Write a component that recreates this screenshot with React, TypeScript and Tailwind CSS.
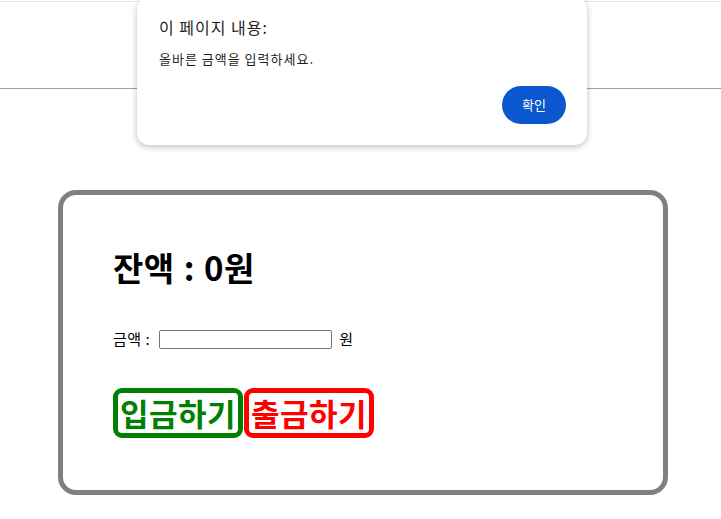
import React from "react";

export default function App() {
  const font = { fontFamily: '"Noto Sans CJK KR", "Noto Sans", sans-serif' };
  return (
    <div className="relative min-h-[519px] w-[721px] overflow-hidden bg-white text-black" style={font}>
      <div className="mt-[1px] h-[88px] border-t border-b border-t-[#e6e6e6] border-b-[#a0a0a0]" />
      <div className="ml-[58px] mt-[101px] h-[305px] w-[610px] rounded-[18px] border-[5px] border-[#808080] px-[50px] pt-[52px]">
        <h1 className="text-[33px] font-bold leading-[40px] tracking-[0.5px] [word-spacing:1px]">잔액 : 0원</h1>
        <div className="mt-[42px] flex h-[20px] items-center text-[15px] leading-[20px]">
          <span className="tracking-[0.5px]">금액 :</span>
          <input
            type="text"
            className="ml-[9px] h-[19px] w-[173px] rounded-[2px] border border-[#767676] bg-white outline-none"
          />
          <span className="ml-[7px]">원</span>
        </div>
        <div className="mt-[39px] flex gap-[1px]">
          <button className="flex h-[50px] w-[130px] items-center justify-center rounded-[9px] border-[5px] border-[#008000] bg-white text-[31px] font-bold leading-[38px] tracking-[0.5px] text-[#008000]">
            입금하기
          </button>
          <button className="flex h-[50px] w-[130px] items-center justify-center rounded-[9px] border-[5px] border-[#ff0000] bg-white text-[31px] font-bold leading-[38px] tracking-[0.5px] text-[#ff0000]">
            출금하기
          </button>
        </div>
      </div>

      <div className="absolute left-[137px] top-[-3px] h-[148px] w-[450px] rounded-[12px] bg-white shadow-[0_2px_6px_rgba(0,0,0,0.25)]">
        <div className="absolute left-[22px] top-[20px] text-[16px] leading-[20px] tracking-[1px] text-[#1f1f1f]">이 페이지 내용:</div>
        <div className="absolute left-[22px] top-[54px] text-[13px] leading-[16px] tracking-[1px] text-[#1f1f1f]">올바른 금액을 입력하세요.</div>
        <button className="absolute left-[365px] top-[89px] flex h-[38px] w-[64px] items-center justify-center rounded-full bg-[#0b57d0] text-[13px] text-white">
          확인
        </button>
      </div>
    </div>
  );
}
